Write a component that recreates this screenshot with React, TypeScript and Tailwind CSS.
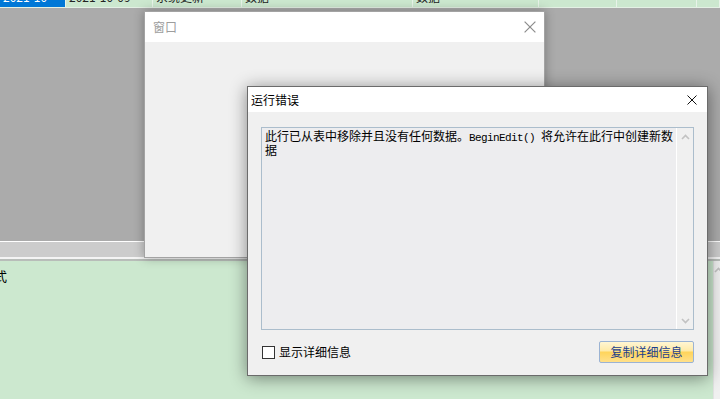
import React from "react";

const cjk = "font-['Noto_Sans_CJK_SC','Noto_Sans',sans-serif]";

function CloseIcon({ size, color }: { size: number; color: string }) {
  return (
    <svg width={size} height={size} viewBox="0 0 10 10" fill="none">
      <path d="M0.5 0.5 L9.5 9.5 M9.5 0.5 L0.5 9.5" stroke={color} strokeWidth="1" />
    </svg>
  );
}

function Chevron({ up }: { up?: boolean }) {
  return (
    <svg width="9" height="6" viewBox="0 0 9 6" fill="none">
      <path
        d={up ? "M1 5 L4.5 1.5 L8 5" : "M1 1 L4.5 4.5 L8 1"}
        stroke="#c2c2c2"
        strokeWidth="1.6"
      />
    </svg>
  );
}

// top grid row, mostly scrolled out of view
const cells = [
  { w: 66, text: "2021-10", selected: true },
  { w: 87, text: "2021-10-09" },
  { w: 89, text: "系统更新" },
  { w: 171, text: "数据" },
  { w: 126, text: "数据" },
  { w: 78, text: "" },
  { w: 80, text: "" },
  { w: 23, text: "" },
];

export default function App() {
  return (
    <div className={`relative w-[720px] h-[399px] overflow-hidden flex flex-col bg-[#ababab] ${cjk}`}>
      {/* grid row */}
      <div className="flex h-[8px] shrink-0 border-b border-[#e4f1e5] overflow-hidden">
        {cells.map((c, i) => (
          <div
            key={i}
            className={`h-[7px] overflow-hidden border-r border-[#e8f3e9] px-[3px] ${
              c.selected ? "bg-[#0078d7] text-white" : "bg-[#cce8cf] text-[#222]"
            }`}
            style={{ width: c.w }}
          >
            <div className="-mt-[10px] text-[12px] leading-[14px] whitespace-nowrap">{c.text}</div>
          </div>
        ))}
      </div>

      {/* gray workspace */}
      <div className="h-[233px] shrink-0 bg-[#ababab]" />

      {/* splitter band */}
      <div className="h-[1px] bg-white shrink-0" />
      <div className="h-[15px] bg-[#cccccc] shrink-0" />
      <div className="h-[2px] bg-[#f4f4f4] shrink-0" />
      <div className="h-[2px] bg-[#b8bdb9] shrink-0" />

      {/* green lower panel */}
      <div className="flex-1 flex bg-[#cce8cf]">
        <div className="flex-1 pt-[7px]">
          <div className="-ml-[6px] text-[13px] leading-[16px] text-black">式</div>
        </div>
        <div className="w-[7px] bg-[#f0f0f0] border-l border-[#e2e2e2] flex flex-col items-center pt-[6px]">
          <div className="w-[6px] overflow-hidden">
            <Chevron up />
          </div>
        </div>
      </div>

      {/* inactive window */}
      <div className="absolute left-[144px] top-[11px] w-[401px] h-[247px] border border-[#a3a3a3] bg-[#f0f0f0] flex flex-col shadow-[0_0_10px_rgba(0,0,0,0.3)]">
        <div className="h-[30px] bg-white flex items-center justify-between pl-[8px] pr-[8px]">
          <span className="text-[12px] text-[#9d9d9d]">窗口</span>
          <CloseIcon size={12} color="#8c8c8c" />
        </div>
        <div className="flex-1" />
      </div>

      {/* error dialog */}
      <div className="absolute left-[247px] top-[86px] w-[461px] h-[290px] border border-[#6b6b6b] bg-[#f0f0f0] flex flex-col shadow-[0_2px_16px_rgba(0,0,0,0.45)]">
        <div className="h-[25px] bg-white flex items-center justify-between pl-[3px] pr-[10px]">
          <span className="text-[12px] text-black">运行错误</span>
          <CloseIcon size={10} color="#111" />
        </div>
        <div className="flex-1 flex flex-col px-[13px] pt-[15px] pb-[12px]">
          <div className="h-[203px] border border-[#abbdcc] bg-[#ededef] flex">
            <div className="flex-1 pl-[3px] pt-[1px] text-[12px] text-black whitespace-nowrap">
              <div className="h-[14px] leading-[13px]">
                此行已从表中移除并且没有任何数据。
                <span className="font-['Liberation_Mono',monospace] text-[11px] leading-[13px] tracking-[-0.6px]">
                  BeginEdit()&nbsp;
                </span>
                将允许在此行中创建新数
              </div>
              <div className="h-[13px] leading-[13px]">据</div>
            </div>
            <div className="w-[17px] border-l border-white bg-[#f0f0f0] flex flex-col items-center justify-between pt-[6px] pb-[5px]">
              <Chevron up />
              <Chevron />
            </div>
          </div>
          <div className="mt-[11px] flex items-center justify-between">
            <label className="flex items-center gap-[4px] ml-[1px]">
              <span className="w-[13px] h-[13px] border border-[#333] bg-white" />
              <span className="text-[12px] text-black">显示详细信息</span>
            </label>
            <button className="w-[95px] h-[22px] border border-[#9bb3d3] rounded-[2px] bg-[linear-gradient(#fff6d4_0%,#ffeaa6_45%,#ffd45a_50%,#ffe08a_100%)] text-[12px] text-[#1c3f8c] flex items-center justify-center">
              复制详细信息
            </button>
          </div>
        </div>
      </div>
    </div>
  );
}
